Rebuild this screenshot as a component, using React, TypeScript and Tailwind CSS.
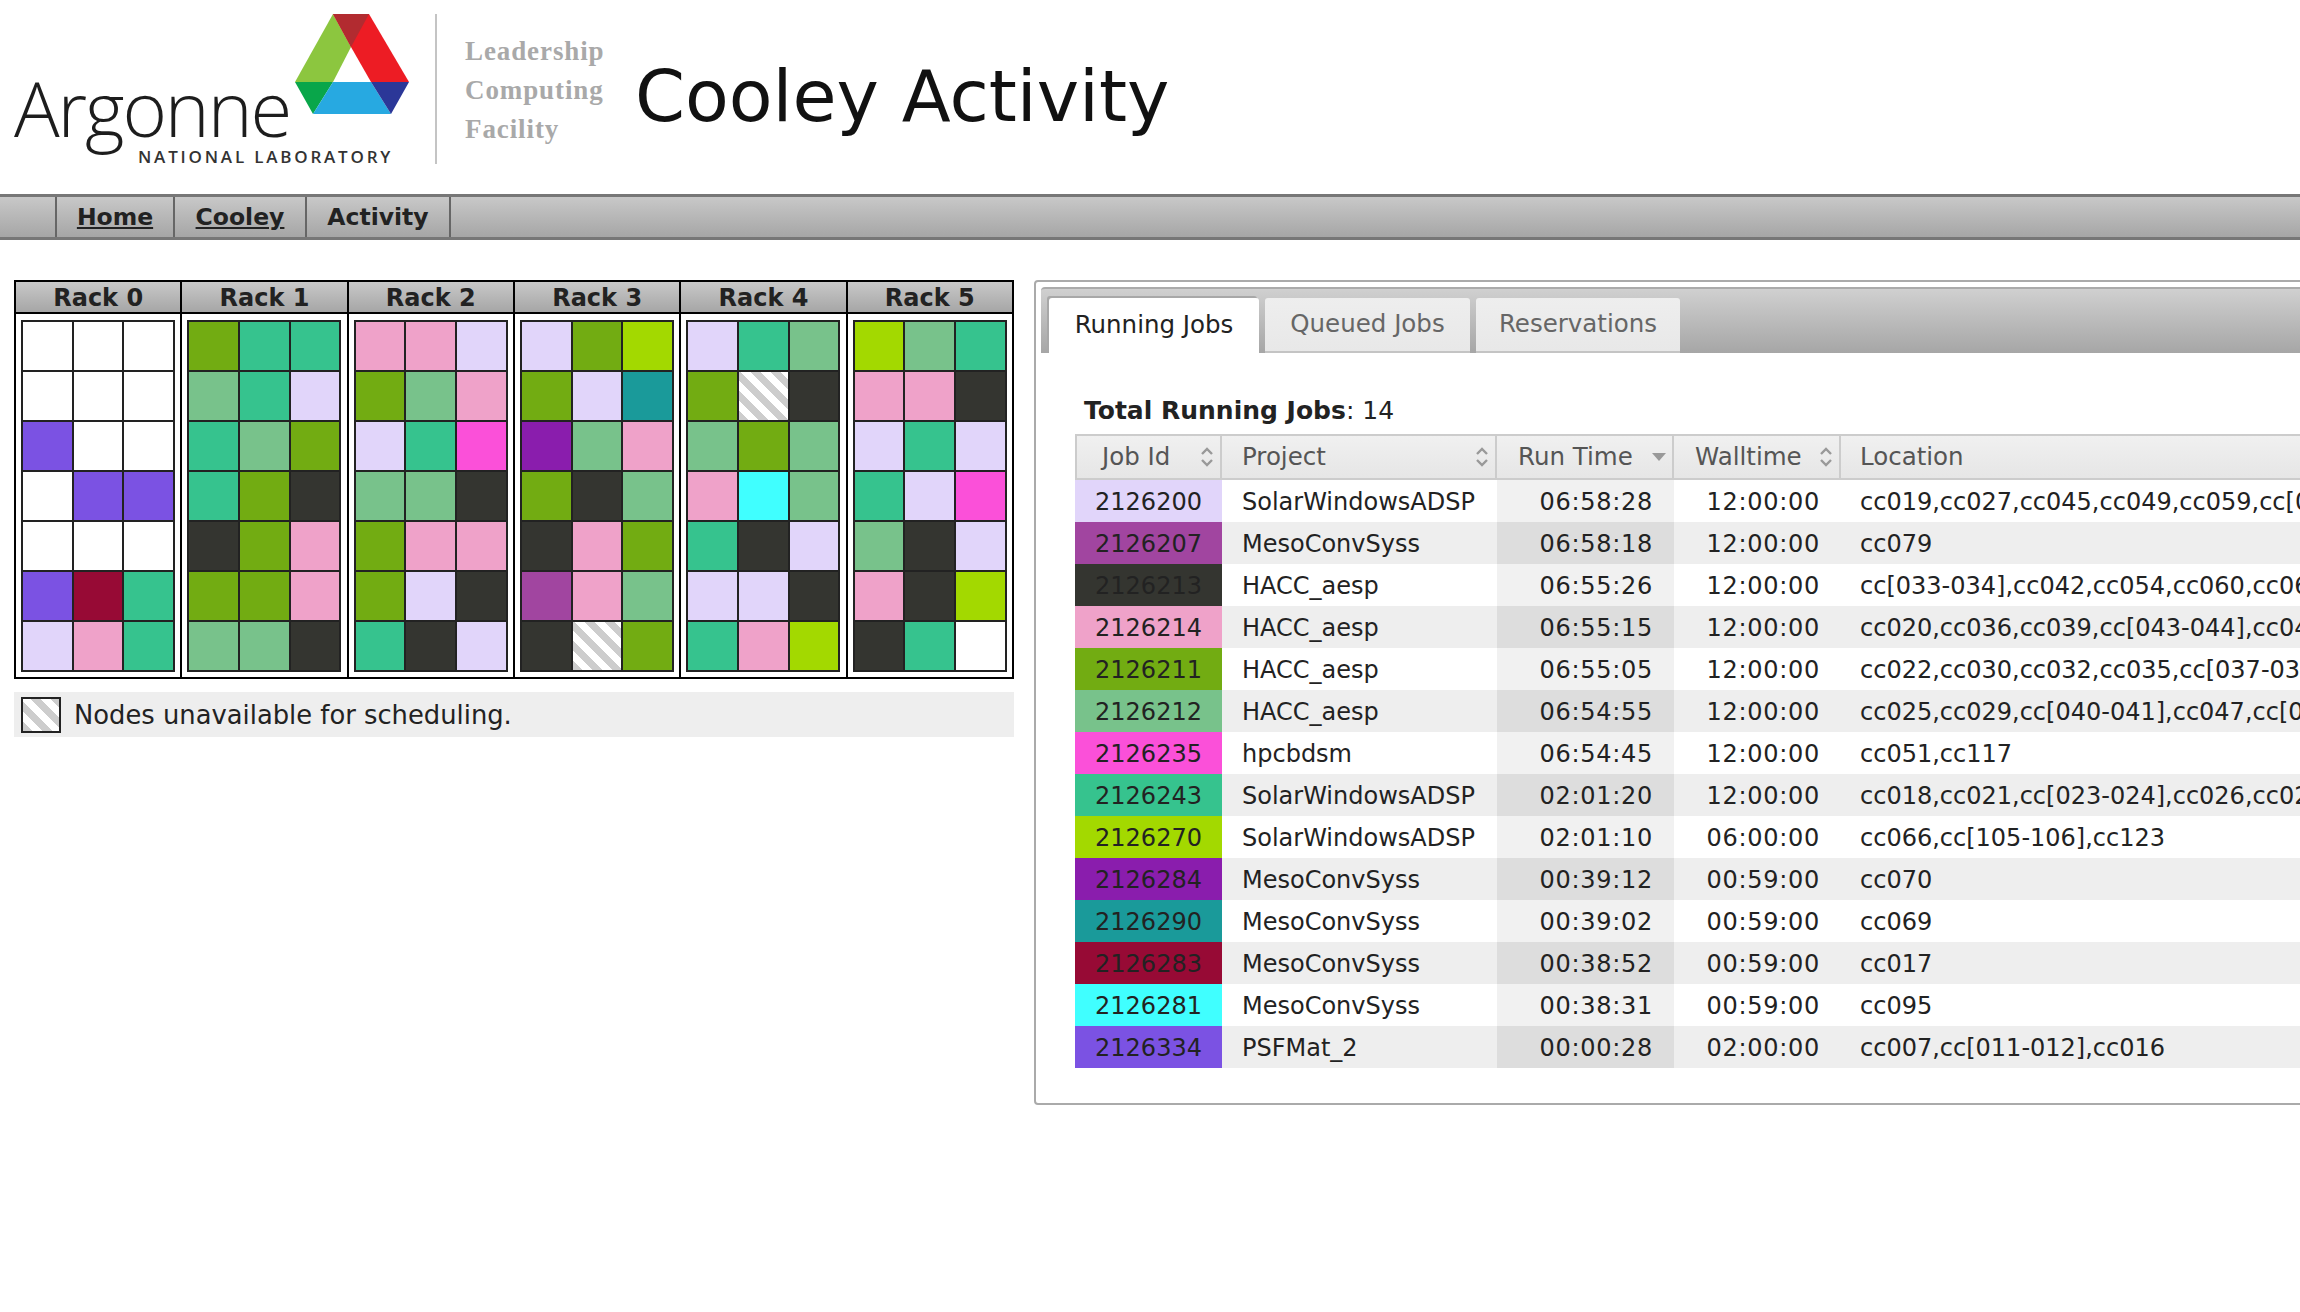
const FONT = "font-['DejaVu_Sans','Liberation_Sans',sans-serif]"

const L = '#e1d5fa'
const P = '#efa2c9'
const G = '#72ac12'
const M = '#78c28b'
const T = '#36c38e'
const D = '#343530'
const V = '#7b52e3'
const R = '#970a35'
const W = '#ffffff'
const O = '#a3d900'
const F = '#fb50d9'
const U = '#8a1dad'
const C = '#1a9a9a'
const Q = '#40ffff'
const H = '#a145a0'
const X = 'hatch'

const racks: string[][] = [
  [W, W, W, W, W, W, V, W, W, W, V, V, W, W, W, V, R, T, L, P, T],
  [G, T, T, M, T, L, T, M, G, T, G, D, D, G, P, G, G, P, M, M, D],
  [P, P, L, G, M, P, L, T, F, M, M, D, G, P, P, G, L, D, T, D, L],
  [L, G, O, G, L, C, U, M, P, G, D, M, D, P, G, H, P, M, D, X, G],
  [L, T, M, G, X, D, M, G, M, P, Q, M, T, D, L, L, L, D, T, P, O],
  [O, M, T, P, P, D, L, T, L, T, L, F, M, D, L, P, D, O, D, T, W],
]

const jobs = [
  { id: '2126200', color: L, project: 'SolarWindowsADSP', run: '06:58:28', wall: '12:00:00', loc: 'cc019,cc027,cc045,cc049,cc059,cc[060-061]' },
  { id: '2126207', color: H, project: 'MesoConvSyss', run: '06:58:18', wall: '12:00:00', loc: 'cc079' },
  { id: '2126213', color: D, project: 'HACC_aesp', run: '06:55:26', wall: '12:00:00', loc: 'cc[033-034],cc042,cc054,cc060,cc063,cc070' },
  { id: '2126214', color: P, project: 'HACC_aesp', run: '06:55:15', wall: '12:00:00', loc: 'cc020,cc036,cc039,cc[043-044],cc046,cc048' },
  { id: '2126211', color: G, project: 'HACC_aesp', run: '06:55:05', wall: '12:00:00', loc: 'cc022,cc030,cc032,cc035,cc[037-038],cc050' },
  { id: '2126212', color: M, project: 'HACC_aesp', run: '06:54:55', wall: '12:00:00', loc: 'cc025,cc029,cc[040-041],cc047,cc[052-053]' },
  { id: '2126235', color: F, project: 'hpcbdsm', run: '06:54:45', wall: '12:00:00', loc: 'cc051,cc117' },
  { id: '2126243', color: T, project: 'SolarWindowsADSP', run: '02:01:20', wall: '12:00:00', loc: 'cc018,cc021,cc[023-024],cc026,cc028,cc031' },
  { id: '2126270', color: O, project: 'SolarWindowsADSP', run: '02:01:10', wall: '06:00:00', loc: 'cc066,cc[105-106],cc123' },
  { id: '2126284', color: U, project: 'MesoConvSyss', run: '00:39:12', wall: '00:59:00', loc: 'cc070' },
  { id: '2126290', color: C, project: 'MesoConvSyss', run: '00:39:02', wall: '00:59:00', loc: 'cc069' },
  { id: '2126283', color: R, project: 'MesoConvSyss', run: '00:38:52', wall: '00:59:00', loc: 'cc017' },
  { id: '2126281', color: Q, project: 'MesoConvSyss', run: '00:38:31', wall: '00:59:00', loc: 'cc095' },
  { id: '2126334', color: V, project: 'PSFMat_2', run: '00:00:28', wall: '02:00:00', loc: 'cc007,cc[011-012],cc016' },
]

const hatch = 'bg-[repeating-linear-gradient(45deg,#cdcdcd_0,#cdcdcd_7px,#ffffff_7px,#ffffff_14px)]'

function SortIcon({ desc }: { desc?: boolean }) {
  if (desc) {
    return (
      <svg width="14" height="22" viewBox="0 0 14 22">
        <path d="M0 7h14l-7 8z" fill="#999" />
      </svg>
    )
  }
  return (
    <svg width="14" height="22" viewBox="0 0 14 22" fill="none" stroke="#999" strokeWidth="2.4">
      <path d="M2 8l5-5 5 5M2 14l5 5 5-5" />
    </svg>
  )
}

function Logo() {
  return (
    <div className="flex w-[635px] h-[194px] shrink-0">
      <div className="relative w-[435px] h-full">
        <span className="absolute left-[14px] top-[62px] text-[76px] leading-[92px] tracking-[-2.1px] text-[#1d1d1d] font-['Open_Sans',sans-serif] font-light whitespace-nowrap">Argonne</span>
        <span className="absolute left-[138px] top-[147px] text-[17px] leading-5 tracking-[2.8px] text-[#333] font-['Open_Sans',sans-serif] font-semibold whitespace-nowrap">NATIONAL LABORATORY</span>
        <svg className="absolute left-[295px] top-[14px]" width="114" height="100" viewBox="295 14 114 100">
          <path d="M333 14l18 33-18 35h-38z" fill="#8cc63f" />
          <path d="M333 14h36l40 68h-38l-20-35z" fill="#ed1c24" />
          <path d="M333 14h36l-18 33z" fill="#b22b30" />
          <path d="M295 82h38l-20 32z" fill="#09a64a" />
          <path d="M333 82h38l20 32h-78z" fill="#27a9e1" />
          <path d="M371 82h38l-18 32z" fill="#2b3798" />
        </svg>
      </div>
      <div className="w-[2px] h-[150px] mt-[14px] bg-[#c4c4c4]" />
      <div className="ml-[28px] mt-[32px] flex flex-col font-['Liberation_Serif',serif] font-bold text-[27px] leading-[39px] tracking-[0.9px] text-[#a9a9a9]">
        <span>Leadership</span>
        <span>Computing</span>
        <span>Facility</span>
      </div>
    </div>
  )
}

function Rack({ name, cells, last }: { name: string; cells: string[]; last?: boolean }) {
  return (
    <div className={`flex-1 flex flex-col ${last ? '' : 'border-r-2 border-black'}`}>
      <div className="h-[32px] pt-[2px] flex items-center justify-center border-b-2 border-black bg-linear-to-b from-[#c8c8c8] to-[#a6a6a6] text-[24px] font-bold text-[#222]">
        {name}
      </div>
      <div className="flex-1 flex items-center justify-center">
        <div className="grid grid-cols-3 gap-[2px] w-[154px] bg-[#222] border-2 border-[#222]">
          {cells.map((c, i) =>
            c === X ? (
              <div key={i} className={`h-[48px] ${hatch}`} />
            ) : (
              <div key={i} className="h-[48px]" style={{ backgroundColor: c }} />
            ),
          )}
        </div>
      </div>
    </div>
  )
}

export default function App() {
  return (
    <div className={`w-[2300px] h-[1312px] overflow-hidden bg-white text-[#222] ${FONT}`}>
      <header className="flex h-[194px]">
        <Logo />
        <h1 className="text-[71.6px] leading-[194px] text-[#111] whitespace-nowrap">Cooley Activity</h1>
      </header>

      <nav className="h-[46px] flex border-y-[3px] border-[#777] bg-linear-to-b from-[#c8c8c8] to-[#a6a6a6] pl-[55px] text-[23.5px] font-bold text-[#222]">
        <a className="w-[120px] pt-[2px] flex items-center justify-center border-x-2 border-[#666] underline">Home</a>
        <a className="w-[132px] pt-[2px] flex items-center justify-center border-r-2 border-[#666] underline">Cooley</a>
        <a className="w-[144px] pt-[2px] flex items-center justify-center border-r-2 border-[#666]">Activity</a>
      </nav>

      <main className="flex items-start pl-[14px] pt-[40px]">
        <div className="w-[1000px] shrink-0">
          <div className="flex h-[399px] border-2 border-black">
            {racks.map((cells, i) => (
              <Rack key={i} name={`Rack ${i}`} cells={cells} last={i === racks.length - 1} />
            ))}
          </div>
          <div className="mt-[13px] h-[45px] bg-[#eeeeee] flex items-center pl-[7px] text-[25.8px]">
            <div className={`w-[40px] h-[36px] border-2 border-[#222] ${hatch}`} />
            <span className="ml-[13px] mt-[2px]">Nodes unavailable for scheduling.</span>
          </div>
        </div>

        <section className="ml-[20px] w-[1400px] h-[825px] shrink-0 border-2 border-[#aaa] rounded-[4px] pt-[5px] pl-[5px]">
          <div className="h-[66px] flex items-end gap-[6px] pl-[8px] border-t-2 border-[#aaa] rounded-tl-[4px] bg-linear-to-b from-[#d0d0d0] to-[#a6a6a6] text-[24.5px] whitespace-nowrap">
            <div className="w-[210px] h-[55px] flex items-center justify-center rounded-t-[3px] bg-white text-[#222] shadow-[-2px_-2px_0_#a8a8a8]">Running Jobs</div>
            <div className="w-[205px] h-[55px] flex items-center justify-center rounded-t-[3px] bg-linear-to-b from-[#eeeeee] to-[#e8e8e8] border-b-2 border-[#c4c4c4] text-[#666]">Queued Jobs</div>
            <div className="w-[204px] h-[55px] flex items-center justify-center rounded-t-[3px] bg-linear-to-b from-[#eeeeee] to-[#e8e8e8] border-b-2 border-[#c4c4c4] text-[#666]">Reservations</div>
          </div>

          <p className="ml-[43px] mt-[41px] text-[25px] leading-[34px]"><b>Total Running Jobs</b>: 14</p>

          <div className="ml-[34px] mt-[6px] w-[1400px] text-[24px] whitespace-nowrap">
            <div className="flex h-[46px] border-y-2 border-[#ccc] bg-linear-to-b from-[#f0f0f0] to-[#e6e6e6] text-[#555] text-[24.5px]">
              <div className="w-[147px] flex items-center justify-between pl-[25px] pr-[6px] border-x-2 border-[#ccc]">Job Id<SortIcon /></div>
              <div className="w-[275px] flex items-center justify-between pl-[20px] pr-[6px] border-r-2 border-[#ccc]">Project<SortIcon /></div>
              <div className="w-[177px] flex items-center justify-between pl-[21px] pr-[6px] border-r-2 border-[#ccc]">Run Time<SortIcon desc /></div>
              <div className="w-[167px] flex items-center justify-between pl-[21px] pr-[6px] border-r-2 border-[#ccc]">Walltime<SortIcon /></div>
              <div className="flex-1 flex items-center pl-[19px]">Location</div>
            </div>
            {jobs.map((job, i) => (
              <div key={job.id} className={`flex h-[42px] items-center ${i % 2 ? 'bg-[#eeeeee]' : 'bg-white'}`}>
                <div className="w-[147px] h-full pt-[2px] flex items-center justify-center" style={{ backgroundColor: job.color }}>{job.id}</div>
                <div className="w-[275px] pl-[20px] mt-[2px]">{job.project}</div>
                <div className={`w-[177px] h-full pt-[2px] flex items-center justify-end pr-[21px] tracking-[0.7px] ${i % 2 ? 'bg-[#dddddd]' : 'bg-[#f1f1f1]'}`}>{job.run}</div>
                <div className="w-[167px] pr-[21px] mt-[2px] text-right tracking-[0.7px]">{job.wall}</div>
                <div className="pl-[19px] mt-[2px]">{job.loc}</div>
              </div>
            ))}
          </div>
        </section>
      </main>
    </div>
  )
}
